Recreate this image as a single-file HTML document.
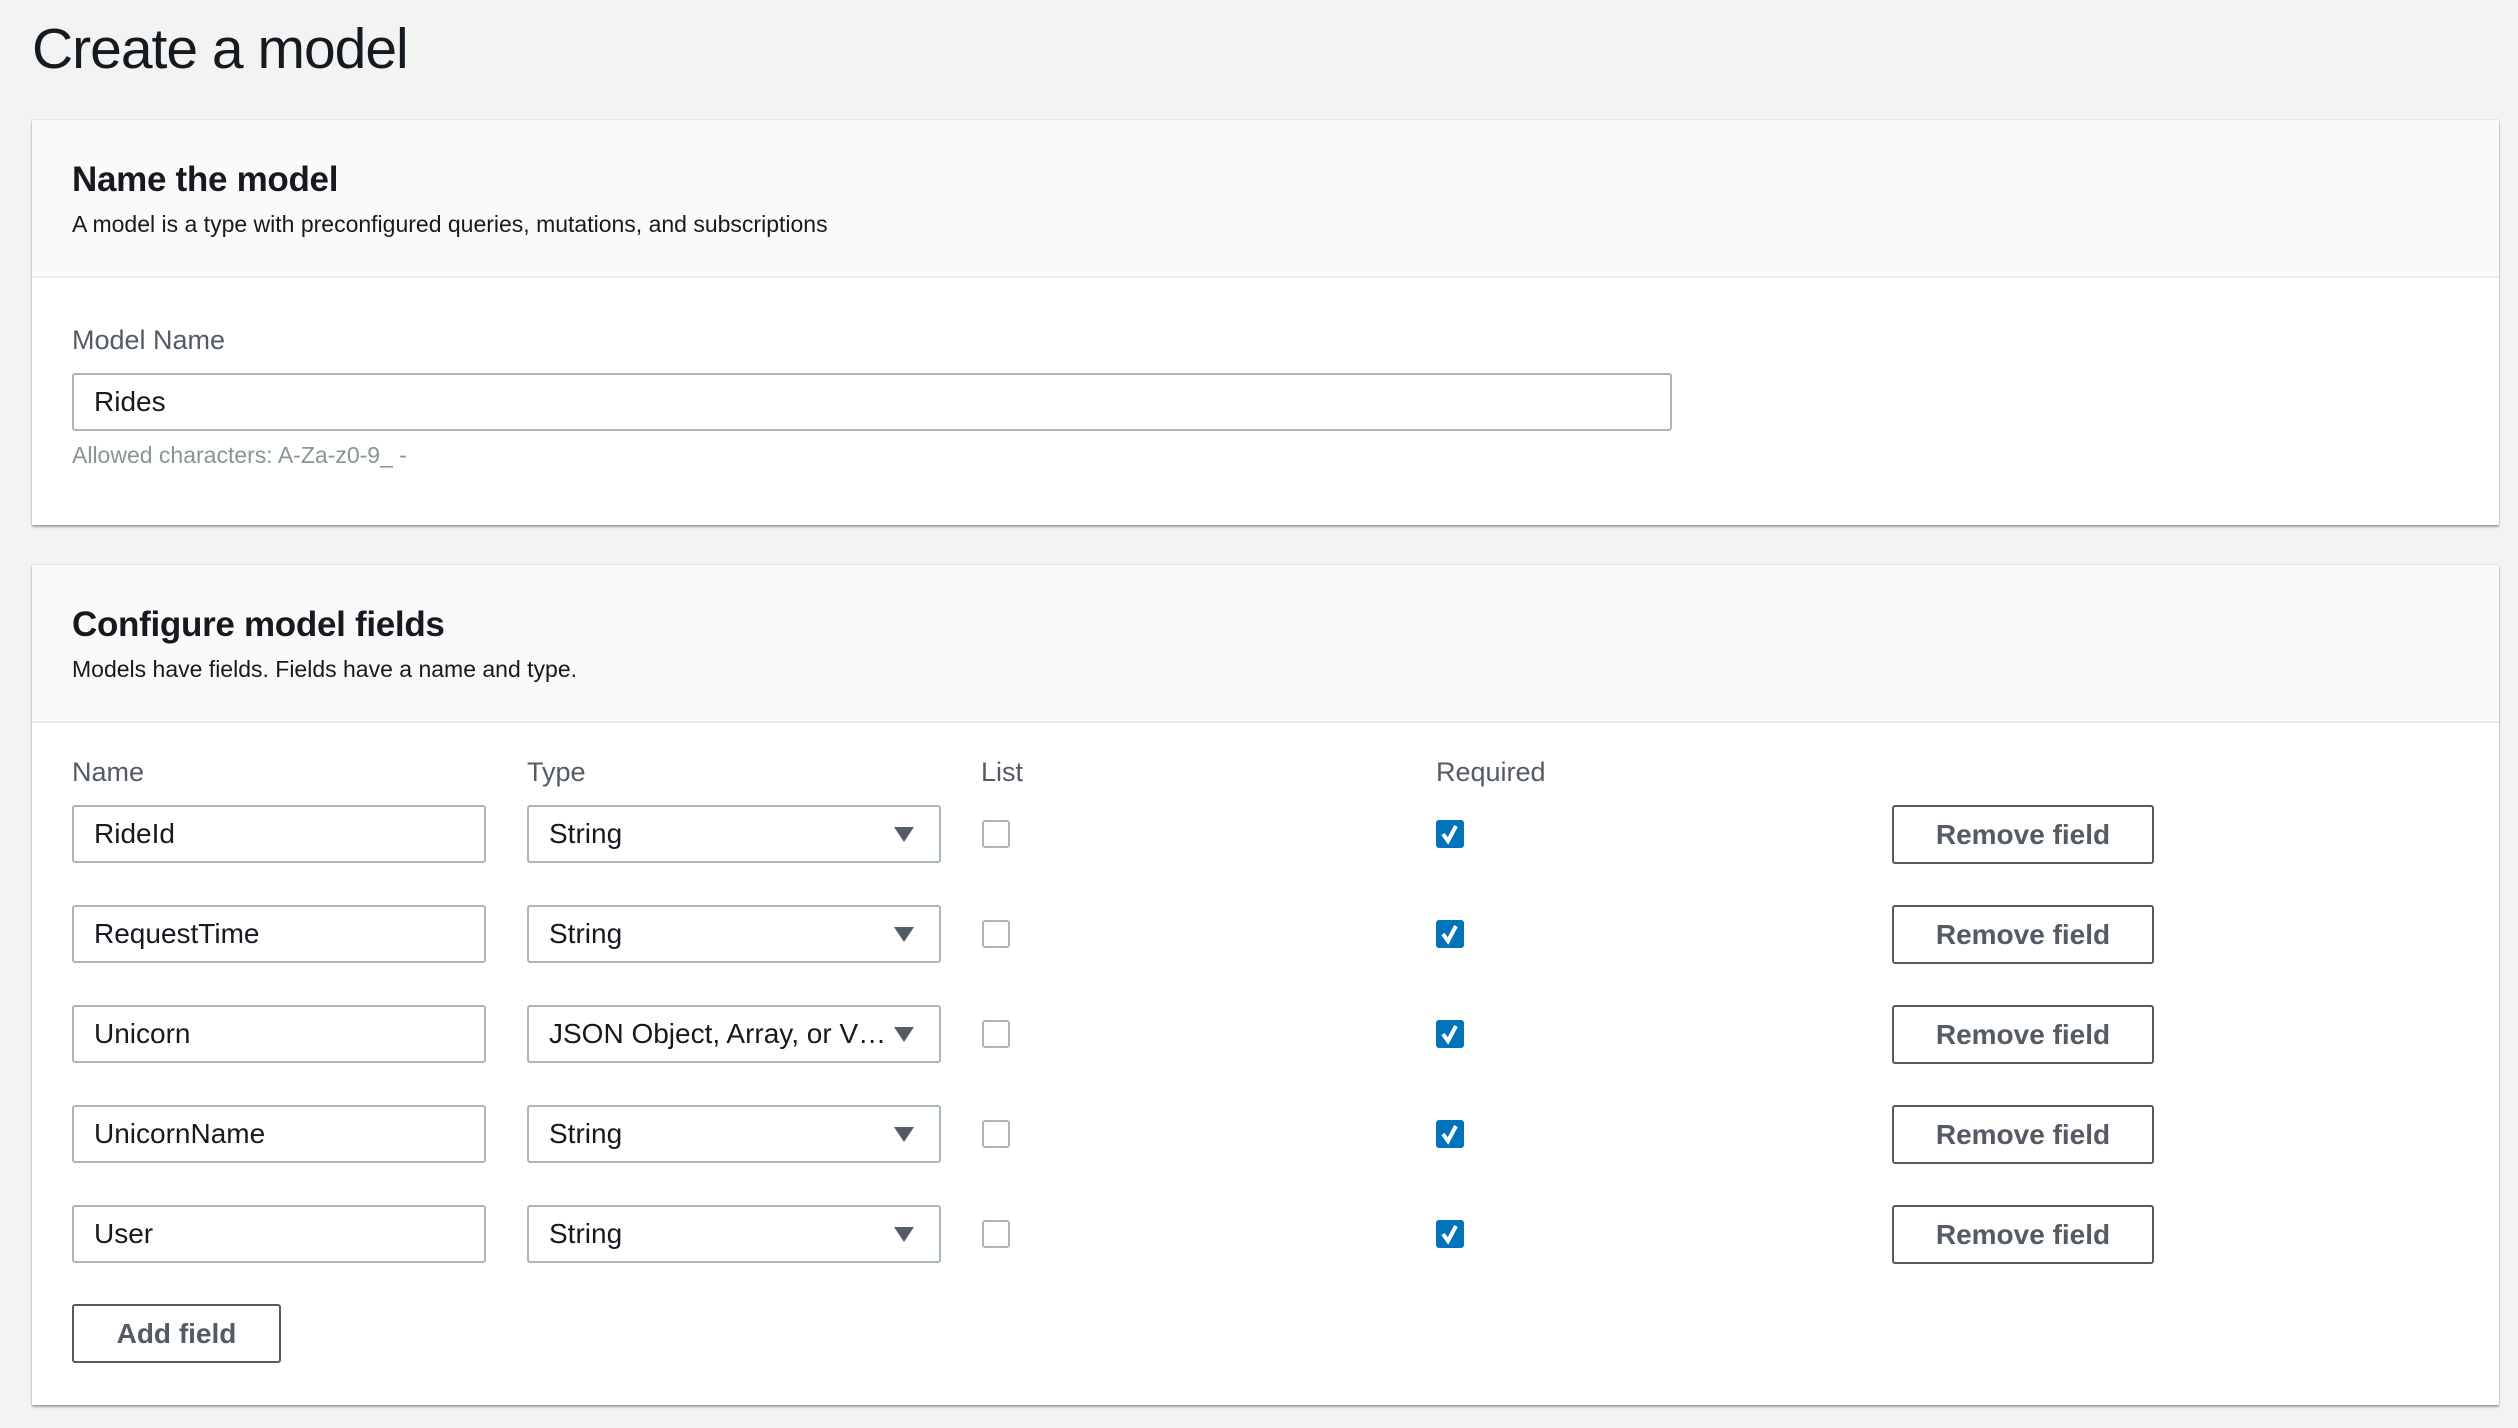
<!DOCTYPE html>
<html><head><style>
*{box-sizing:border-box;margin:0;padding:0}
body{width:2518px;height:1428px;background:#f2f3f3;font-family:"Liberation Sans",sans-serif;color:#16191f;position:relative;overflow:hidden}
.abs{position:absolute}
h1{position:absolute;left:32px;top:16px;font-size:57px;font-weight:400;letter-spacing:-1px}
.panel{position:absolute;left:32px;width:2467px;background:#fff;box-shadow:0 2px 2px rgba(0,28,36,.35),0 0 1px rgba(0,28,36,.3)}
.ph{background:#fafafa;border-bottom:2px solid #eaeded;position:absolute;left:0;right:0;top:0}
.ph h2{position:absolute;left:40px;font-size:35px;font-weight:700;letter-spacing:-.3px}
.ph p{position:absolute;left:40px;font-size:23px;color:#16191f}
.lbl{position:absolute;font-size:27px;color:#545b64}
.inp{position:absolute;border:2px solid #aab7b8;border-radius:3px;background:#fff;font-size:28px;padding-left:20px;display:flex;align-items:center}
.cb{position:absolute;width:28px;height:28px;border:2px solid #aab7b8;border-radius:3px;background:#fff}
.cbc{position:absolute;width:28px;height:28px;border-radius:3px;background:#0073bb}
.btn{position:absolute;border:2px solid #545b64;border-radius:3px;background:#fff;font-size:28px;font-weight:700;color:#545b64;display:flex;align-items:center;justify-content:center}
.arr{position:absolute;right:25px;top:20px;width:0;height:0;border-left:10px solid transparent;border-right:10px solid transparent;border-top:15px solid #545b64}
</style></head><body>
<h1>Create a model</h1>
<div class="panel" style="top:120px;height:405px">
 <div class="ph" style="height:158px"><h2 style="top:40px">Name the model</h2><p style="top:91px">A model is a type with preconfigured queries, mutations, and subscriptions</p></div>
 <div class="lbl" style="left:40px;top:205px">Model Name</div>
 <div class="inp" style="left:40px;top:253px;width:1600px;height:58px">Rides</div>
 <div class="abs" style="left:40px;top:322px;font-size:23px;color:#879596">Allowed characters: A-Za-z0-9_ -</div>
</div>
<div class="panel" style="top:565px;height:840px">
 <div class="ph" style="height:158px"><h2 style="top:40px">Configure model fields</h2><p style="top:91px">Models have fields. Fields have a name and type.</p></div>
 <div class="lbl" style="left:40px;top:192px">Name</div>
 <div class="lbl" style="left:495px;top:192px">Type</div>
 <div class="lbl" style="left:949px;top:192px">List</div>
 <div class="lbl" style="left:1404px;top:192px">Required</div>
</div>
<div id="rows"></div>
<script>
var names=["RideId","RequestTime","Unicorn","UnicornName","User"];
var types=["String","String","JSON Object, Array, or V\u2026","String","String"];
var h="";
for(var i=0;i<5;i++){var y=805+i*100;
h+='<div class="inp" style="left:72px;top:'+y+'px;width:414px;height:58px">'+names[i]+'</div>';
h+='<div class="inp" style="left:527px;top:'+y+'px;width:414px;height:58px">'+types[i]+'<div class="arr"></div></div>';
h+='<div class="cb" style="left:982px;top:'+(y+15)+'px"></div>';
h+='<div class="cbc" style="left:1436px;top:'+(y+15)+'px"><svg width="28" height="28" viewBox="0 0 28 28"><path d="M7 14 L12 21 L20 6" stroke="#fff" stroke-width="4" fill="none"/></svg></div>';
h+='<div class="btn" style="left:1892px;top:'+y+'px;width:262px;height:59px">Remove field</div>';}
h+='<div class="btn" style="left:72px;top:1304px;width:209px;height:59px">Add field</div>';
document.getElementById("rows").innerHTML=h;
</script>
</body></html>
